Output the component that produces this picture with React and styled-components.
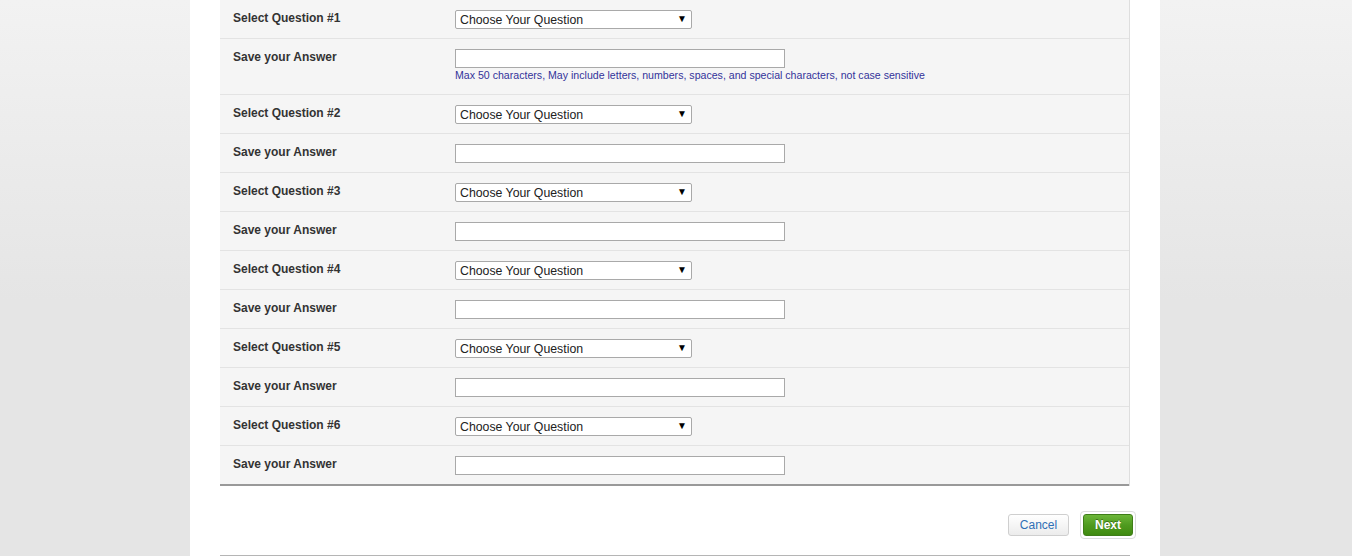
import React from "react";
import styled, { createGlobalStyle } from "styled-components";

const GlobalStyle = createGlobalStyle`
  html, body {
    margin: 0;
    padding: 0;
    min-height: 100%;
  }
  body {
    background: #e5e5e5 linear-gradient(to bottom, #f2f2f2 0px, #e5e5e5 300px) no-repeat;
    font-family: "Liberation Sans", Arial, sans-serif;
    color: #333;
  }
`;

const Page = styled.div`
  width: 970px;
  margin: 0 0 0 calc(50% - 486px);
  background: #ffffff;
  padding: 0 30px;
  box-sizing: border-box;
  min-height: 556px;
`;

const FormTable = styled.div`
  width: 910px;
  background: #f5f5f5;
  border-right: 1px solid #dedede;
  box-sizing: border-box;
`;

const Row = styled.div`
  display: grid;
  grid-template-columns: 235px 1fr;
  padding: 10px 0 ${({ hasHint }) => (hasHint ? "12px" : "9px")};
  border-bottom: ${({ last }) => (last ? "2px solid #999" : "1px solid #e3e3e3")};
`;

const Label = styled.div`
  padding-left: 13px;
  font-size: 12px;
  font-weight: bold;
  line-height: 16px;
  color: #333;
`;

const Field = styled.div`
  display: flex;
  flex-direction: column;
  align-items: flex-start;
`;

const SelectBox = styled.div`
  position: relative;
  width: 237px;
  height: 19px;
  box-sizing: border-box;
  border: 1px solid #a9a9a9;
  border-radius: 2px;
  background: #fff;
`;

const Select = styled.select`
  appearance: none;
  -webkit-appearance: none;
  display: block;
  width: 100%;
  height: 17px;
  border: none;
  background: transparent;
  padding: 1px 0 0 4px;
  margin: 0;
  font-family: "Liberation Sans", Arial, sans-serif;
  font-size: 12.3px;
  line-height: 15px;
  color: #222;
  outline: none;
`;

const Arrow = styled.span`
  position: absolute;
  right: 4px;
  top: 2px;
  font-size: 10px;
  line-height: 12px;
  color: #000;
  pointer-events: none;
`;

const TextInput = styled.input`
  width: 330px;
  height: 19px;
  box-sizing: border-box;
  border: 1px solid #a9a9a9;
  background: #fff;
  margin: 0;
  padding: 0 3px;
  font-family: "Liberation Sans", Arial, sans-serif;
  font-size: 12px;
`;

const Hint = styled.div`
  margin-top: 0;
  font-size: 10.6px;
  line-height: 14px;
  color: #33339a;
`;

const Footer = styled.div`
  display: flex;
  justify-content: flex-end;
  align-items: center;
  padding: 25px 0 16px;
  border-bottom: 1px solid #b5b5b5;
  width: 910px;
  box-sizing: border-box;
`;

const ButtonGroup = styled.div`
  display: flex;
  align-items: center;
  gap: 11px;
  margin-right: -6px;
`;

const CancelButton = styled.button`
  width: 61px;
  height: 22px;
  border: 1px solid #cfcfcf;
  border-radius: 3px;
  background: linear-gradient(to bottom, #ffffff, #ececec);
  color: #2f6fb6;
  font-family: "Liberation Sans", Arial, sans-serif;
  font-size: 12px;
  padding: 0;
  cursor: pointer;
`;

const NextFrame = styled.div`
  padding: 2px;
  border: 1px solid #dcdcdc;
  border-radius: 4px;
  background: #fff;
`;

const NextButton = styled.button`
  display: block;
  width: 50px;
  height: 22px;
  border: 1px solid #3f7d18;
  border-radius: 3px;
  background: linear-gradient(to bottom, #6cb638 0%, #4f9b1f 50%, #3f8a10 100%);
  color: #fff;
  font-family: "Liberation Sans", Arial, sans-serif;
  font-size: 12px;
  font-weight: bold;
  text-shadow: 0 -1px 0 rgba(0, 0, 0, 0.35);
  padding: 0;
  cursor: pointer;
`;

const questions = [1, 2, 3, 4, 5, 6];

const QuestionSelect = () => (
  <SelectBox>
    <Select defaultValue="">
      <option value="">Choose Your Question</option>
      <option>What was the name of your first pet?</option>
      <option>What city were you born in?</option>
      <option>What is your mother's maiden name?</option>
    </Select>
    <Arrow>▼</Arrow>
  </SelectBox>
);

export default function App() {
  return (
    <>
      <GlobalStyle />
      <Page>
        <FormTable>
          {questions.map((n, i) => (
            <React.Fragment key={n}>
              <Row>
                <Label>Select Question #{n}</Label>
                <Field>
                  <QuestionSelect />
                </Field>
              </Row>
              <Row hasHint={i === 0} last={i === questions.length - 1}>
                <Label>Save your Answer</Label>
                <Field>
                  <TextInput type="text" maxLength={50} />
                  {i === 0 && (
                    <Hint>
                      Max 50 characters, May include letters, numbers, spaces,
                      and special characters, not case sensitive
                    </Hint>
                  )}
                </Field>
              </Row>
            </React.Fragment>
          ))}
        </FormTable>
        <Footer>
          <ButtonGroup>
            <CancelButton>Cancel</CancelButton>
            <NextFrame>
              <NextButton>Next</NextButton>
            </NextFrame>
          </ButtonGroup>
        </Footer>
      </Page>
    </>
  );
}
